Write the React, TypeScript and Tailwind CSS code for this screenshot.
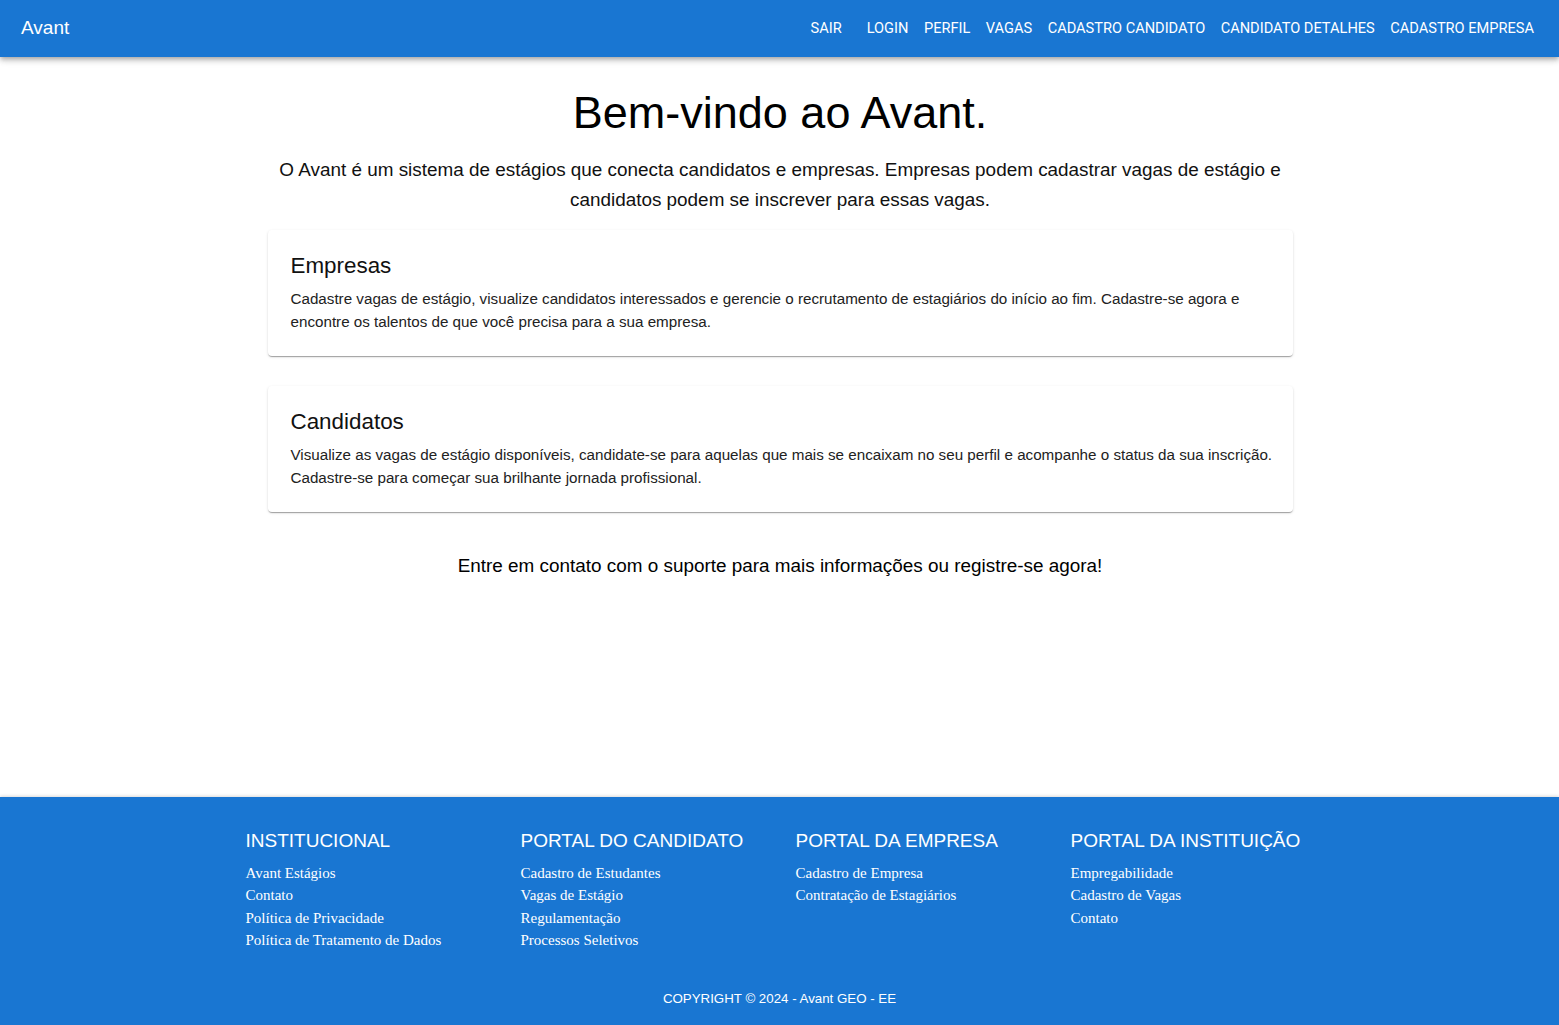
import React from "react";

const navItems = ["SAIR", "LOGIN", "PERFIL", "VAGAS", "CADASTRO CANDIDATO", "CANDIDATO DETALHES", "CADASTRO EMPRESA"];

const footerCols = [
  { title: "INSTITUCIONAL", links: ["Avant Estágios", "Contato", "Política de Privacidade", "Política de Tratamento de Dados"] },
  { title: "PORTAL DO CANDIDATO", links: ["Cadastro de Estudantes", "Vagas de Estágio", "Regulamentação", "Processos Seletivos"] },
  { title: "PORTAL DA EMPRESA", links: ["Cadastro de Empresa", "Contratação de Estagiários"] },
  { title: "PORTAL DA INSTITUIÇÃO", links: ["Empregabilidade", "Cadastro de Vagas", "Contato"] },
];

function Card({ title, text }: { title: string; text: string }) {
  return (
    <div className="bg-white rounded shadow-[0_2px_1px_-1px_rgba(0,0,0,0.2),0_1px_1px_0_rgba(0,0,0,0.14),0_1px_3px_0_rgba(0,0,0,0.12)] pl-[23px] pr-[14px] pt-[22px] pb-[23px]">
      <h2 className="text-[22.4px] leading-[28px] text-[#111] mb-[7px]">{title}</h2>
      <p className="text-[15.2px] leading-[23px] text-[#222]">{text}</p>
    </div>
  );
}

export default function App() {
  return (
    <div className="min-h-screen flex flex-col bg-white" style={{ fontFamily: '"Liberation Sans", Arial, sans-serif' }}>
      {/* Header */}
      <header className="h-[57px] bg-[#1976d2] text-white flex items-center justify-between pl-[21px] pr-[25px] shadow-[0_2px_4px_-1px_rgba(0,0,0,0.2),0_4px_5px_0_rgba(0,0,0,0.14),0_1px_10px_0_rgba(0,0,0,0.12)] relative z-10">
        <span className="text-[19px]">Avant</span>
        <nav className="flex items-center" style={{ fontFamily: "Roboto, sans-serif" }}>
          {navItems.map((item, i) => (
            <a key={item} className={`text-[14.6px] font-normal ${i === 0 ? "mr-[25px]" : i === navItems.length - 1 ? "" : "mr-[15.5px]"}`}>
              {item}
            </a>
          ))}
        </nav>
      </header>

      {/* Main */}
      <main className="flex-1 w-[1026px] mx-auto pl-[1px] pt-[29px]">
        <h1 className="text-center text-[45px] leading-[54px] text-black">Bem-vindo ao Avant.</h1>
        <p className="text-center text-[18.9px] leading-[30px] text-[#111] mt-[15px]">
          O Avant é um sistema de estágios que conecta candidatos e empresas. Empresas podem cadastrar vagas de estágio e candidatos podem se inscrever para essas vagas.
        </p>
        <div className="flex flex-col gap-[30px] mt-[15px]">
          <Card
            title="Empresas"
            text="Cadastre vagas de estágio, visualize candidatos interessados e gerencie o recrutamento de estagiários do início ao fim. Cadastre-se agora e encontre os talentos de que você precisa para a sua empresa."
          />
          <Card
            title="Candidatos"
            text="Visualize as vagas de estágio disponíveis, candidate-se para aquelas que mais se encaixam no seu perfil e acompanhe o status da sua inscrição. Cadastre-se para começar sua brilhante jornada profissional."
          />
        </div>
        <p className="text-center text-[18.9px] leading-[30px] text-black mt-[39px]">
          Entre em contato com o suporte para mais informações ou registre-se agora!
        </p>
      </main>

      {/* Footer */}
      <footer className="bg-[#1976d2] text-white h-[228px] pt-[33px] shadow-[0_-1px_3px_rgba(0,0,0,0.15)]">
        <div className="w-[1100px] mx-auto grid grid-cols-4">
          {footerCols.map((col) => (
            <div key={col.title} className="pl-[16px]">
              <h3 className="text-[19px] leading-[22px] mb-[10px]">{col.title}</h3>
              <ul style={{ fontFamily: '"Liberation Serif", "Times New Roman", serif' }}>
                {col.links.map((l) => (
                  <li key={l} className="text-[15px] leading-[22.3px]">{l}</li>
                ))}
              </ul>
            </div>
          ))}
        </div>
        <p className="text-center text-[13.3px] leading-[16px] mt-[40px]">COPYRIGHT © 2024 - Avant GEO - EE</p>
      </footer>
    </div>
  );
}
